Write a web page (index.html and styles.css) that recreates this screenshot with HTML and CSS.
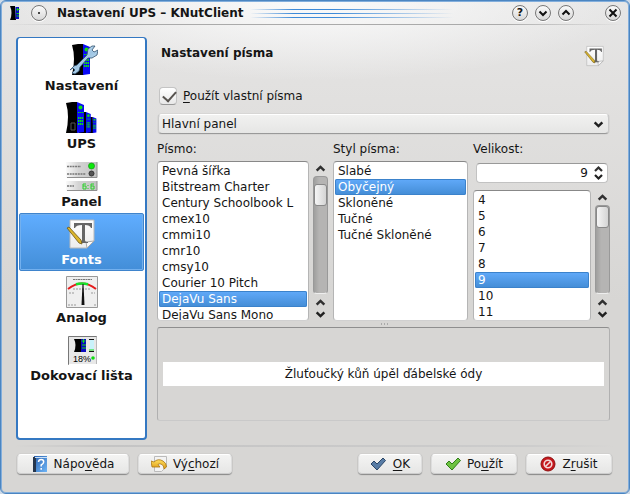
FILE: index.html
```html
<!DOCTYPE html>
<html lang="cs">
<head>
<meta charset="utf-8">
<title>Nastavení UPS – KNutClient</title>
<link rel="stylesheet" href="styles.css">
</head>
<body>
<svg class="defs" aria-hidden="true">
  <defs>
    <linearGradient id="steel" x1="0" y1="0" x2="1" y2="1"><stop offset="0" stop-color="#eaf6ff"/><stop offset=".5" stop-color="#9fc6e4"/><stop offset="1" stop-color="#d5e9f7"/></linearGradient>
    <linearGradient id="plate" x1="0" x2="1"><stop offset="0" stop-color="#fafafa"/><stop offset=".4" stop-color="#d4d4d4"/><stop offset="1" stop-color="#c2c2c2"/></linearGradient>
    <linearGradient id="paper" x1="0" y1="0" x2="0" y2="1"><stop offset="0" stop-color="#fff"/><stop offset="1" stop-color="#ececec"/></linearGradient>
    <linearGradient id="book" x1="0" y1="0" x2="1" y2="1"><stop offset="0" stop-color="#2b62b0"/><stop offset="1" stop-color="#6db4f6"/></linearGradient>
    <linearGradient id="gold" x1="0" y1="0" x2="0" y2="1"><stop offset="0" stop-color="#ffdf60"/><stop offset="1" stop-color="#dd9a12"/></linearGradient>
    <symbol id="tower" viewBox="0 0 19 31">
      <path d="M0 1 6 0h5l1 31H0Q4 14 0 1z" fill="#000"/>
      <path d="M11 0l7 3v27l-7 1z" fill="#0a0af5"/>
      <circle cx="14.500" cy="5.500" r="2" fill="#10e010"/>
      <path d="M12 10.500h6" stroke="#10e010" stroke-dasharray="1.500 .5"/>
      <path d="M12 16h5M12 19h5M12 22h5" stroke="#10e010" stroke-width="2" stroke-dasharray="1.500 .5"/>
    </symbol>
    <symbol id="fonts" viewBox="0 0 32 32">
      <path d="M4 2h24v21l-7 7H4z" fill="url(#paper)" stroke="#b9b9b9"/>
      <path d="M28 23l-7 7-1-6z" fill="#fafafa" stroke="#aaa"/>
      <path d="M8 5h18v5h-1q-1-3-6-3v15q0 2 3 2v1h-9v-1q3 0 3-2V7q-6 0-7 3H8z" fill="#666"/>
      <path d="M1 10l2-1 12 13 1 4-3-1z" fill="#dcb62c" stroke="#6c5718" stroke-width=".8"/>
    </symbol>
    <symbol id="up" viewBox="0 0 10 8"><path d="M1.500 6 5 2.500 8.500 6" fill="none" stroke="#303030" stroke-width="2.200"/></symbol>
    <symbol id="down" viewBox="0 0 10 8"><path d="M1.500 2 5 5.500 8.500 2" fill="none" stroke="#202020" stroke-width="2.200"/></symbol>
    <symbol id="tick" viewBox="0 0 16 16"><path d="M1 8l3-3 3 3 6-6 2.500 2.500L7 14z"/></symbol>
  </defs>
</svg>
<div class="window">
  <header class="titlebar">
    <svg class="appicon" viewBox="0 0 11 14"><path d="M0 0h5l1 14H0Q3 7 0 0z" fill="#000"/><path d="M5.500 1H9v12H5.500z" fill="#0a0ac0"/><path d="M7.500 2v3M6.500 3.500h3M6.500 7.500h2.500M6.500 10h2.500" stroke="#10d010"/></svg>
    <button class="round" aria-label="Přichytit"><svg viewBox="0 0 16 16"><circle cx="8" cy="8" r="1"/></svg></button>
    <h1>Nastavení UPS – KNutClient</h1>
    <div class="stripes"><i></i><i></i><i></i></div>
    <div class="controls">
      <button class="round" aria-label="Co je to?"><b>?</b></button>
      <button class="round" aria-label="Minimalizovat"><svg viewBox="0 0 16 16"><path d="M4.500 6.500 8 10l3.500-3.500"/></svg></button>
      <button class="round" aria-label="Maximalizovat"><svg viewBox="0 0 16 16"><path d="M4.500 9.500 8 6l3.500 3.500"/></svg></button>
      <button class="round close" aria-label="Zavřít"><svg viewBox="0 0 16 16"><path d="M4.500 4.500l7 7m0-7l-7 7"/></svg></button>
    </div>
  </header>

  <div class="content">
    <nav class="pages">
      <button class="page"><svg viewBox="0 0 32 32"><use href="#tower" x="6" y="0" width="19" height="31"/><path d="M4 26l4-4 3-1L21 11l1-6 4-3h3l-3 4 2 2 4-2-1 5-5 3-4 0L14 23l-1 4-4 3-3-1 3-3-2-2z" fill="url(#steel)" stroke="#31516d" stroke-width=".8"/></svg>Nastavení</button>
      <button class="page"><svg viewBox="0 0 32 32"><use href="#tower" x="20" y="15" width="12" height="16"/><use href="#tower" x="12" y="10" width="14" height="21"/><use href="#tower" x="0" y="0" width="19" height="31"/><path d="M5 21h4v7H5z" fill="none" stroke="#555"/></svg>UPS</button>
      <button class="page"><svg viewBox="0 0 32 32"><path d="M0 2h31v16H0zM0 21h31v10H0z" fill="url(#plate)"/><path d="M1 17.500h30V2M1 30.500h30V21" fill="none" stroke="#8e8e8e"/><path d="M1 6.500h14M1 14h19M1 26h7" stroke="#777" stroke-width="1.500" stroke-dasharray="2 .7"/><circle cx="25.500" cy="6" r="3" fill="#0bea0b" stroke="#159015" stroke-width=".7"/><circle cx="25.500" cy="13.500" r="2.500" fill="#555" stroke="#333"/><path d="M20 24h-3v5h3v-3h-3M28 24h-3v2h3v3h-3v-3M22 25v1m0 2v1" fill="none" stroke="#2bd02b"/></svg>Panel</button>
      <button class="page current" aria-current="page"><svg><use href="#fonts"/></svg>Fonts</button>
      <button class="page"><svg viewBox="0 0 32 32"><path d="M.500.500h31v31H.500z" fill="#efefef" stroke="#999"/><path d="M7 3.500h19" stroke="#777" stroke-dasharray="2 .5"/><path d="M2 13q14-11 28 0" fill="none" stroke="#e51b1b" stroke-width="2"/><path d="M10 8.200q6-1.500 12 0" fill="none" stroke="#15e32a" stroke-width="2.500"/><path d="M7 13h18M3 17h5m17 0h4M2 29h8m18 0h2" stroke="#999" stroke-dasharray="2 1"/><path d="M16.500 8h1l1 21h-3z" fill="#111"/></svg>Analog</button>
      <button class="page"><svg viewBox="0 0 32 32"><path d="M2.500 2.500h28v28h-28z" fill="#e8e8e8" stroke="#777"/><path d="M3 30.500h28V3" fill="none" stroke="#fff"/><path d="M8 5h7v13H8q3-7 0-13z" fill="#000"/><path d="M15 5h5v13h-5z" fill="#0909c0"/><path d="M17.500 5v4m-2-2h4M16 11h4M16 14h4" stroke="#14dc14"/><path d="M24 5h4v11h-4z" fill="#c9f2fb"/><path d="M23 5.500h5M23 17.500h5" stroke="#111"/><path d="M23 16h5" stroke="#12dc12"/><text class="percent" x="7" y="28">18%</text><circle cx="27" cy="24" r="1.800" fill="#12dc12"/></svg>Dokovací lišta</button>
    </nav>

    <main class="panel">
      <div class="heading"><h2>Nastavení písma</h2><svg><use href="#fonts"/></svg></div>
      <label class="custom"><input type="checkbox" checked><span><u>P</u>oužít vlastní písma</span></label>
      <div class="combo">
        <select aria-label="Část programu"><option>Hlavní panel</option></select>
        <svg><use href="#down"/></svg>
      </div>
      <div class="chooser">
        <div class="column">
          <label for="family">Písmo:</label>
          <div class="scroller">
            <select id="family" class="list" size="10">
              <option>Pevná šířka</option><option>Bitstream Charter</option><option>Century Schoolbook L</option><option>cmex10</option><option>cmmi10</option><option>cmr10</option><option>cmsy10</option><option>Courier 10 Pitch</option><option selected>DejaVu Sans</option><option>DejaVu Sans Mono</option>
            </select>
            <div class="scrollbar">
              <button aria-label="Nahoru"><svg><use href="#up"/></svg></button>
              <div class="track family-track"><div class="thumb"></div></div>
              <button aria-label="O řádek výš"><svg><use href="#up"/></svg></button>
              <button aria-label="Dolů"><svg><use href="#down"/></svg></button>
            </div>
          </div>
        </div>
        <div class="column">
          <label for="style">Styl písma:</label>
          <div class="scroller">
            <select id="style" class="list" size="9">
              <option>Slabé</option><option selected>Obyčejný</option><option>Skloněné</option><option>Tučné</option><option>Tučné Skloněné</option>
            </select>
          </div>
        </div>
        <div class="column">
          <label for="size">Velikost:</label>
          <div class="spin">
            <input id="size" type="number" value="9">
            <div class="steps"><button aria-label="Zvětšit"><svg><use href="#up"/></svg></button><button aria-label="Zmenšit"><svg><use href="#down"/></svg></button></div>
          </div>
          <div class="scroller">
            <select class="list" size="8" aria-label="Velikost písma">
              <option>4</option><option>5</option><option>6</option><option>7</option><option>8</option><option selected>9</option><option>10</option><option>11</option>
            </select>
            <div class="scrollbar">
              <button aria-label="Nahoru"><svg><use href="#up"/></svg></button>
              <div class="track"><div class="thumb"></div></div>
              <button aria-label="O řádek výš"><svg><use href="#up"/></svg></button>
              <button aria-label="Dolů"><svg><use href="#down"/></svg></button>
            </div>
          </div>
        </div>
      </div>
      <div class="splitter"></div>
      <div class="preview"><p>Žluťoučký kůň úpěl ďábelské ódy</p></div>
    </main>
  </div>

  <footer class="actions">
    <button class="action help"><svg viewBox="0 0 16 16"><path d="M2 0h13v16H2z" fill="url(#book)"/><path d="M1 1h3v15H1z" fill="#26364d"/><path d="M3 1.500h12" stroke="#c8e0f7"/><path d="M6.500 6q.2-2.500 2.700-2.500T11.700 6Q11.700 7.500 9.200 9v1.500m0 1.500v1.700" fill="none" stroke="#fff" stroke-width="1.500"/></svg><span>Nápo<u>v</u>ěda</span></button>
    <button class="action defaults"><svg viewBox="0 0 16 16"><path d="M3.500.500h12v10l-5 5h-7z" fill="#f3f3f3" stroke="#bbb"/><path d="M0 5l3 1q4-4 9-1 3.500 2 3.500 6l-2.500 2q0-4-3-5-2-.500-3 .5l2 2.500H1z" fill="url(#gold)" stroke="#a87511" stroke-width=".8"/></svg><span>Vý<u>c</u>hozí</span></button>
    <span class="push"></span>
    <button class="action ok"><svg class="blue"><use href="#tick"/></svg><span><u>O</u>K</span></button>
    <button class="action apply"><svg class="green"><use href="#tick"/></svg><span>Po<u>u</u>žít</span></button>
    <button class="action cancel"><svg viewBox="0 0 16 16"><circle cx="8" cy="8" r="7" fill="#c5161b" stroke="#8e1010"/><circle cx="8" cy="8" r="3.800" fill="none" stroke="#f3dada" stroke-width="1.600"/><path d="M5.500 10.500l5-5" stroke="#f3dada" stroke-width="1.600"/></svg><span>Z<u>r</u>ušit</span></button>
  </footer>
</div>
</body>
</html>
```

FILE: styles.css
```css
* { box-sizing: border-box; }
body {
  margin: 0;
  background: #cfdbe8;
  color: #151515;
  font: 12px/16px "DejaVu Sans", sans-serif;
}
button, select, input { margin: 0; font: inherit; color: inherit; }
button { padding: 0; border: 0; background: none; }
h1, h2, p { margin: 0; }
svg { display: block; flex: none; }
u { text-decoration-skip-ink: none; text-underline-offset: 2px; }
.defs { position: absolute; width: 0; height: 0; }

.window {
  display: flex;
  flex-direction: column;
  min-height: 100vh;
  border: 1px solid #4b85c1;
  border-radius: 6px;
  box-shadow: inset 0 0 0 1px #82aedc;
  background:
    radial-gradient(ellipse 50% 80px at 50% 0, #fbfbfb, transparent),
    linear-gradient(#e6e6e6, #e2e1e0 80px, #d7d6d4 300px);
}

.titlebar {
  display: flex;
  align-items: center;
  height: 24px;
  margin: 0 5px;
  padding: 1px 3px 0 4px;
  border-bottom: 1px solid;
  border-image: linear-gradient(90deg, transparent, #aaa 20%, #aaa 80%, transparent) 1;
}
.appicon { width: 11px; height: 14px; margin-right: 10px; }
.titlebar h1, .heading h2 { font-size: 12px; font-weight: bold; }
.titlebar h1 { margin-left: 10px; white-space: nowrap; }
.round {
  display: grid;
  place-items: center;
  width: 16px;
  height: 16px;
  border: 1px solid #777;
  border-radius: 50%;
  background: linear-gradient(#fafafa, #d8d8d8);
  box-shadow: 0 1px 0 #fff;
}
.round svg { width: 16px; height: 16px; margin: -1px; fill: none; stroke: #111; stroke-width: 2; }
.round circle { fill: #111; stroke: none; }
.round b { font-size: 11px; line-height: 12px; }
.stripes {
  display: grid;
  flex: 1;
  gap: 3px;
  margin: 0 22px 0 6px;
}
.stripes i {
  height: 1px;
  background: linear-gradient(90deg, #5c9bd800, #3d8ad8 18%, #3d8ad8 35%, #5c9bd800 85%);
}
.controls { display: flex; gap: 7px; }
.close { margin-left: 24px; }

.content {
  display: flex;
  flex: 1;
  gap: 10px;
  margin: 12px 19px 5px 15px;
}
.pages {
  flex: none;
  width: 131px;
  padding: 1px;
  border: 2px solid #3478c2;
  border-width: 1px 2px 2px;
  border-radius: 4px;
  background: #fff;
}
.page {
  display: flex;
  flex-direction: column;
  align-items: center;
  gap: 2px;
  width: 100%;
  height: 58px;
  padding-top: 5px;
  font-size: 13px;
  font-weight: bold;
}
.page svg { width: 32px; height: 32px; }
.current {
  border: 1px solid #3f84cc;
  border-radius: 2px;
  padding-top: 4px;
  background: linear-gradient(#60adff, #438ed8);
  box-shadow: inset 0 0 0 1px #73b0ee;
  color: #fff;
}
.percent { font: 9px "Liberation Sans", sans-serif; }

.panel { display: flex; flex: 1; flex-direction: column; min-width: 0; }
.heading {
  display: flex;
  align-items: center;
  justify-content: space-between;
  height: 37px;
  padding: 0 4px;
}
.heading h2 { padding-bottom: 5px; }
.heading svg { width: 22px; height: 22px; }
.custom {
  display: flex;
  align-items: center;
  gap: 6px;
  height: 19px;
  margin: 12px 0 9px 2px;
}
.custom input {
  width: 18px;
  height: 18px;
  appearance: none;
  border: 1px solid #c4c4c4;
  border-bottom-color: #999;
  border-radius: 4px;
  background: linear-gradient(#fff, #e8e8e8);
}
.custom input:checked::before {
  content: "";
  display: block;
  width: 11px;
  height: 6px;
  margin: 3px;
  border: solid #57534f;
  border-width: 0 0 2px 2px;
  transform: rotate(-48deg);
}
.combo { display: flex; align-items: center; margin: 0 1px; }
.combo select {
  flex: 1;
  height: 20px;
  padding: 0 3px;
  appearance: none;
  border: 1px solid #d6d6d6;
  border-color: #fff #c9c9c9 #999;
  border-radius: 4px;
  background: linear-gradient(#f1f1f0, #e6e6e5);
  box-shadow: 0 0 1px #888;
}
.combo svg { width: 11px; height: 9px; margin-left: -16px; margin-right: 5px; pointer-events: none; }

.chooser {
  display: grid;
  grid-template-columns: 171fr 135fr 137fr;
  column-gap: 5px;
  height: 187px;
}
.column { display: flex; flex-direction: column; min-width: 0; min-height: 0; }
.column label { height: 27px; padding-top: 7px; }
.scroller { display: flex; flex: 1; gap: 4px; min-height: 0; }
.list {
  flex: 1;
  min-width: 0;
  height: 100%;
  padding: 1px;
  overflow: hidden;
  scrollbar-width: none;
  border: 1px solid #b5b5b5;
  border-color: #888 #b5b5b5 #d0d0d0;
  border-radius: 4px;
  background: #fff;
  outline: 0;
}
.list option { min-height: 16px; height: 16px; padding: 1px 3px 0; line-height: 16px; border-radius: 2px; }
.list option:checked {
  background: linear-gradient(#61aafa, #438cd5);
  box-shadow: inset 0 0 0 1px #3b82cb;
  -webkit-text-fill-color: #fff;
}
.scrollbar {
  display: flex;
  flex: none;
  flex-direction: column;
  align-items: center;
  width: 15px;
  padding: 1px 0;
}
.scrollbar button { height: 12px; }
.scrollbar svg { width: 11px; height: 9px; }
.track {
  flex: 1;
  width: 15px;
  margin: 2px 0;
  border: 1px solid #999;
  border-bottom-color: #eee;
  border-radius: 4px;
  background: linear-gradient(90deg, #9f9f9e, #b5b4b3 40%);
}
.family-track { padding-top: 7px; }
.thumb {
  height: 22px;
  border: 1px solid #888;
  border-radius: 3px;
  background: linear-gradient(90deg, #f5f5f5, #d4d4d4);
}
.spin {
  display: flex;
  align-items: center;
  height: 20px;
  margin: 2px 2px 7px 3px;
  border: 1px solid #c2c2c2;
  border-top-color: #999;
  border-radius: 4px;
  background: #fff;
}
.spin input {
  flex: 1;
  min-width: 0;
  padding: 0 5px;
  border: 0;
  background: none;
  text-align: right;
  appearance: textfield;
}
.spin input::-webkit-inner-spin-button { appearance: none; }
.steps { display: flex; flex-direction: column; margin-right: 3px; }
.steps svg { width: 11px; height: 8px; }

.splitter {
  width: 8px;
  height: 6px;
  margin: 0 auto;
  background: radial-gradient(circle, #aaa 1px, transparent 1px) 0 0 / 3px 6px;
}
.preview {
  display: flex;
  flex: 1;
  flex-direction: column;
  justify-content: center;
  max-height: 94px;
  padding: 0 5px;
  border: 1px solid #b5b5b5;
  border-color: #8e8e8e #b0b0b0 #c9c9c9;
  border-radius: 3px;
}
.preview p { padding: 4px; background: #fff; text-align: center; }

.actions {
  display: flex;
  gap: 9px;
  margin: 0 16px 0 15px;
  padding: 7px 1px 19px;
  border-top: 2px solid;
  border-image: linear-gradient(90deg, transparent, #c4c4c4 15%, #ccc 85%, transparent) 1;
}
.push { flex: 1; }
.action {
  display: flex;
  align-items: center;
  justify-content: center;
  gap: 6px;
  height: 20px;
  border: 1px solid #fff;
  border-color: #fff #ddd #ccc;
  border-radius: 4px;
  background: linear-gradient(#f4f4f3, #e6e6e5);
  box-shadow: 0 1px 1px #888, 0 0 1px #999;
}
.action svg { width: 16px; height: 16px; }
.help { width: 112px; }
.defaults { width: 94px; }
.ok { width: 64px; gap: 7px; }
.apply, .cancel { width: 86px; }
.blue { fill: #587ca5; stroke: #2c4767; }
.green { fill: #6dc341; stroke: #2f7d18; }
```
